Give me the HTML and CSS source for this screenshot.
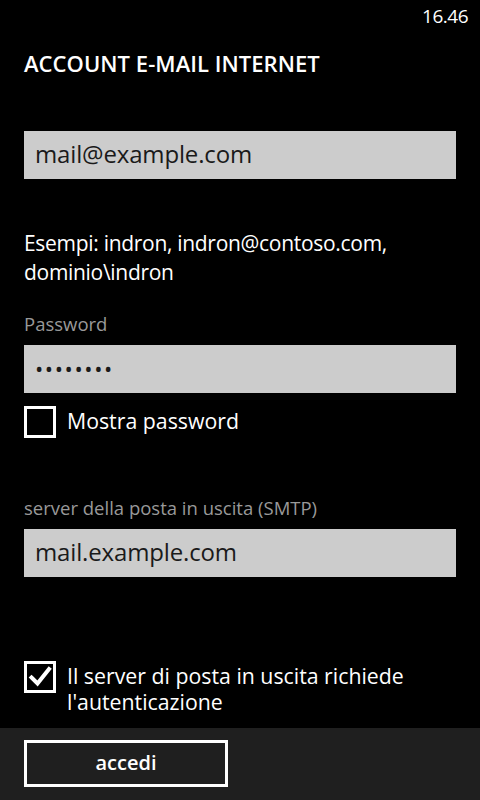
FILE: index.html
```html
<!DOCTYPE html>
<html lang="it">
<head>
  <meta charset="UTF-8">
  <meta name="viewport" content="width=device-width, initial-scale=1.0">
  <title>Account e-mail Internet</title>
  <link rel="stylesheet" href="styles.css">
</head>
<body>

  <div class="phone">
    <div class="status-bar">
      <span class="clock">16.46</span>
    </div>

    <h1 class="page-title">ACCOUNT E-MAIL INTERNET</h1>

    <div class="content">
      <!-- label scrolled away under the title -->
      <div class="clipped-label"><span>Indirizzo e-mail</span></div>
      <div class="textbox">mail@example.com</div>

      <p class="hint">Esempi: indron, indron@contoso.com, dominio\indron</p>

      <label class="field-label">Password</label>
      <div class="textbox dots">&#8226;&#8226;&#8226;&#8226;&#8226;&#8226;&#8226;&#8226;</div>

      <div class="check-row">
        <span class="checkbox"></span>
        <span class="check-text">Mostra password</span>
      </div>

      <label class="field-label smtp">server della posta in uscita (SMTP)</label>
      <div class="textbox">mail.example.com</div>

      <div class="check-row auth">
        <span class="checkbox">
          <svg width="26" height="26" viewBox="0 0 26 26">
            <path d="M4.5 13.5 L10.5 19.5 L22 5" fill="none" stroke="#fff" stroke-width="4" stroke-linecap="square"/>
          </svg>
        </span>
        <span class="check-text">Il server di posta in uscita richiede l'autenticazione</span>
      </div>
    </div>

    <div class="app-bar">
      <button class="app-button">accedi</button>
    </div>
  </div>

</body>
</html>
```

FILE: styles.css
```css
body {
  margin: 0;
  background-color: #000;
  font-family: "Open Sans", "Noto Sans", sans-serif;
  color: #fff;
}
.phone {
  width: 480px;
  height: 800px;
  display: flex;
  flex-direction: column;
  overflow: hidden;
}
.status-bar {
  height: 32px;
  display: flex;
  justify-content: flex-end;
  align-items: center;
  padding-right: 12px;
}
.clock {
  font-size: 19px;
  letter-spacing: -0.5px;
}
.page-title {
  margin: 15px 0 0 24px;
  font-size: 22px;
  font-weight: 600;
  line-height: 32px;
  letter-spacing: 0.05px;
}
.content {
  flex: 1;
  padding: 0 24px;
  overflow: hidden;
}
.clipped-label {
  height: 3px;
  margin-top: 40px;
  overflow: hidden;
  position: relative;
  color: #333333;
  font-size: 18px;
}
.clipped-label span {
  position: absolute;
  bottom: 1px;
  left: 11px;
  line-height: 20px;
}
.textbox {
  height: 48px;
  margin-top: 9px;
  padding: 0 11px;
  background-color: #cccccc;
  color: #1a1a1a;
  font-size: 24px;
  line-height: 46px;
  letter-spacing: -0.15px;
}
.dots {
  font-size: 22px;
  letter-spacing: 1.6px;
}
.hint {
  margin: 50px 0 0 0;
  font-size: 21px;
  line-height: 29px;
  letter-spacing: -0.3px;
  padding-right: 20px;
}
.field-label {
  display: block;
  margin-top: 25px;
  color: #999999;
  font-size: 18.5px;
  line-height: 24px;
}
.field-label + .textbox {
  margin-top: 9px;
}
.check-row {
  display: flex;
  align-items: flex-start;
  gap: 11px;
  margin-top: 13px;
}
.checkbox {
  flex: none;
  width: 26px;
  height: 26px;
  border: 3px solid #fff;
}
.checkbox svg {
  display: block;
}
.check-text {
  font-size: 21.3px;
  line-height: 26px;
  padding-top: 2px;
}
.smtp {
  margin-top: 58px;
}
.auth {
  margin-top: 84px;
}
.app-bar {
  height: 72px;
  flex: none;
  background-color: #1f1f1f;
  padding: 12px 24px 0;
  box-sizing: border-box;
}
.app-button {
  width: 204px;
  height: 47px;
  background: transparent;
  border: 3px solid #fff;
  color: #fff;
  font-family: "Open Sans", "Noto Sans", sans-serif;
  font-size: 20px;
  font-weight: 600;
  padding: 0 0 3px;
}
```
